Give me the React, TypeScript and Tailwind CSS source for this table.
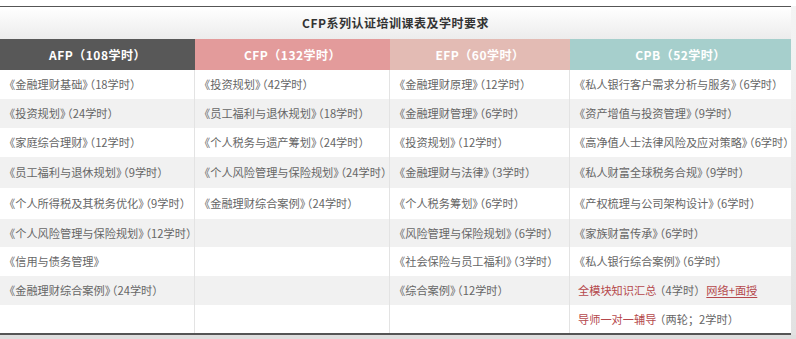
import { Fragment } from "react";

type Cell = React.ReactNode;

// trim the empty outer space of full-width brackets, like the original page font does
const trim: Record<string, string> = {
  "《": "ml-[-4px]",
  "》": "mr-[-2px]",
  "（": "ml-[-2px]",
  "）": "mr-[-4px]",
};

function fmt(s: string, key = 0): Cell {
  const out: Cell[] = [];
  let buf = "";
  const flush = () => {
    if (buf) out.push(buf);
    buf = "";
  };
  for (const ch of s) {
    if (trim[ch]) {
      flush();
      out.push(
        <span key={out.length} className={trim[ch]}>
          {ch}
        </span>
      );
    } else buf += ch;
  }
  flush();
  return <Fragment key={key}>{out}</Fragment>;
}

const cols = [
  { title: "AFP（108学时）", w: "w-[195px]", bg: "bg-[#585858]" },
  { title: "CFP（132学时）", w: "w-[195px]", bg: "bg-[#e39b9b]" },
  { title: "EFP（60学时）", w: "w-[180px]", bg: "bg-[#e3bbb4]" },
  { title: "CPB（52学时）", w: "w-[221px]", bg: "bg-[#a6cfcc]" },
];

const heights = ["h-[29px]", "h-[29px]", "h-[29px]", "h-[31px]", "h-[31px]", "h-[28px]", "h-[29px]", "h-[29px]", "h-[28px]"];

const rows: Cell[][] = [
  ["《金融理财基础》（18学时）", "《投资规划》（42学时）", "《金融理财原理》（12学时）", "《私人银行客户需求分析与服务》（6学时）"],
  ["《投资规划》（24学时）", "《员工福利与退休规划》（18学时）", "《金融理财管理》（6学时）", "《资产增值与投资管理》（9学时）"],
  ["《家庭综合理财》（12学时）", "《个人税务与遗产筹划》（24学时）", "《投资规划》（12学时）", "《高净值人士法律风险及应对策略》（6学时）"],
  ["《员工福利与退休规划》（9学时）", "《个人风险管理与保险规划》（24学时）", "《金融理财与法律》（3学时）", "《私人财富全球税务合规》（9学时）"],
  ["《个人所得税及其税务优化》（9学时）", "《金融理财综合案例》（24学时）", "《个人税务筹划》（6学时）", "《产权梳理与公司架构设计》（6学时）"],
  ["《个人风险管理与保险规划》（12学时）", "", "《风险管理与保险规划》（6学时）", "《家族财富传承》（6学时）"],
  ["《信用与债务管理》", "", "《社会保险与员工福利》（3学时）", "《私人银行综合案例》（6学时）"],
  [
    "《金融理财综合案例》（24学时）",
    "",
    "《综合案例》（12学时）",
    <>
      <span className="text-[#b5484c]">全模块知识汇总</span>
      {fmt("（4学时）")}
      <span className="ml-[5px] text-[#b5484c] underline underline-offset-2">网络+面授</span>
    </>,
  ],
  [
    "",
    "",
    "",
    <>
      <span className="text-[#b5484c]">导师一对一辅导</span>
      {fmt("（两轮；2学时）")}
    </>,
  ],
];

export default function App() {
  return (
    <div className="w-[796px] h-[339px] overflow-hidden bg-white font-['Noto_Sans_CJK_SC',sans-serif]">
      <div className="h-[6px]" />
      <div className="flex">
        <div className="w-[791px] border-t-[1.5px] border-[#555]">
          <div className="h-[32px] flex items-center justify-center bg-gradient-to-b from-white to-[#ececec] text-[12px] font-bold tracking-[0.5px] text-[#333]">
            CFP系列认证培训课表及学时要求
          </div>
          <div className="flex h-[31px]">
            {cols.map((c) => (
              <div
                key={c.title}
                className={`${c.w} ${c.bg} flex items-center justify-center text-white text-[12px] font-bold tracking-[0.5px]`}
              >
                {c.title}
              </div>
            ))}
          </div>
          {rows.map((r, i) => (
            <div key={i} className={`flex ${heights[i]} ${i % 2 === 1 ? "bg-[#f1f1f1]" : "bg-white"}`}>
              {r.map((cell, j) => (
                <div
                  key={j}
                  className={`${cols[j].w} flex items-center pl-[8px] text-[11.2px] text-[#666] whitespace-nowrap ${j < 3 ? "border-r border-[#e3e3e3]" : ""}`}
                >
                  <span>{typeof cell === "string" ? fmt(cell) : cell}</span>
                </div>
              ))}
            </div>
          ))}
          <div className="h-[2px] bg-[#555]" />
        </div>
        <div className="flex-1 bg-gradient-to-b from-[#f4f4f4] to-[#e2e2e2]" />
      </div>
      <div className="h-[10px] bg-[#dedede]" />
    </div>
  );
}
